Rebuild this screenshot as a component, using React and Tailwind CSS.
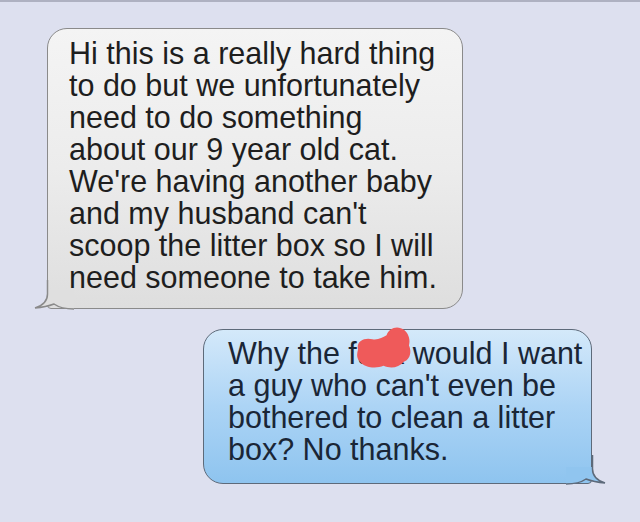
import React from 'react';

const received = [
  'Hi this is a really hard thing',
  'to do but we unfortunately',
  'need to do something',
  'about our 9 year old cat.',
  "We're having another baby",
  "and my husband can't",
  'scoop the litter box so I will',
  'need someone to take him.',
];

const CensorBlob = () => (
  <svg
    className="absolute left-[-1px] top-[-9px] w-[56px] h-[42px] pointer-events-none"
    viewBox="0 0 55 41"
  >
    <path
      d="M2,22 C0,14 8,10 16,12 C22,13 26,10 30,8 C32,2 38,-1 44,1 C50,3 54,10 52,18 C55,24 53,32 47,34 C42,40 34,41 27,38 C20,41 8,40 4,34 C0,30 1,26 2,22 Z"
      fill="#ef5a5a"
    />
  </svg>
);

export default function App() {
  return (
    <div
      className="w-[640px] h-[522px] bg-[#dde0ef] border-t-2 border-[#aeb1c1] overflow-hidden flex flex-col"
      style={{ fontFamily: '"Liberation Sans", Arial, sans-serif' }}
    >
      {/* received message */}
      <div className="pl-[47px] pt-[26px]">
        <div className="relative w-[416px] h-[281px]">
          <div className="h-full rounded-[20px] rounded-bl-[4px] border-[1.5px] border-[#8a8a8a] bg-gradient-to-b from-[#f4f4f4] via-[#ececec] to-[#dedede] pl-[21px] pt-[8px] text-[30.5px] leading-[32px] text-[#1e1e1e]">
            <div className="relative z-10">
              {received.map(line => (
                <div key={line}>{line}</div>
              ))}
            </div>
          </div>
          <svg
            className="absolute z-[5] left-[-13px] bottom-[-1px] w-[40px] h-[30px]"
            viewBox="0 0 40 30"
          >
            <path d="M13.5,10 L13.5,14 Q13.5,24 1,28 Q12,27 20,24 Q27,29 40,29 L40,10 Z" fill="#dfdfdf" />
            <path
              d="M13.5,0 L13.5,14 Q13.5,24 1,28 Q12,27 20,24 Q27,29 40,29"
              fill="none"
              stroke="#8a8a8a"
              strokeWidth="1.5"
            />
          </svg>
        </div>
      </div>

      {/* sent message */}
      <div className="pl-[203px] pt-[20px]">
        <div className="relative w-[389px] h-[155px]">
          <div className="h-full rounded-[20px] rounded-br-[4px] border-[1.5px] border-[#5d6a7a] bg-gradient-to-b from-[#d4e9fa] via-[#acd4f5] to-[#8ec4ef] pl-[24px] pt-[7px] text-[30.5px] leading-[32px] text-[#1a2636]">
            <div className="relative z-10">
              <div>
                Why the f
                <span className="relative">
                  uck
                  <CensorBlob />
                </span>{' '}
                would I want
              </div>
              <div>a guy who can't even be</div>
              <div>bothered to clean a litter</div>
              <div>box? No thanks.</div>
            </div>
          </div>
          <svg
            className="absolute z-[5] right-[-14px] bottom-[-1px] w-[40px] h-[30px]"
            viewBox="0 0 40 30"
          >
            <path d="M26.5,12 L26.5,14 Q26.5,24 39,28 Q28,27 20,24 Q13,29 0,29 L0,12 Z" fill="#90c5ef" />
            <path
              d="M26.5,0 L26.5,14 Q26.5,24 39,28 Q28,27 20,24 Q13,29 0,29"
              fill="none"
              stroke="#5d6a7a"
              strokeWidth="1.5"
            />
          </svg>
        </div>
      </div>
    </div>
  );
}
